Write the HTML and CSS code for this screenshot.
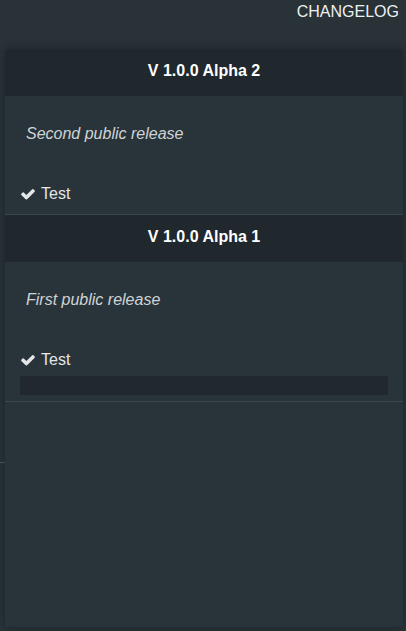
FILE: index.html
```html
<!DOCTYPE html>
<html>
<head>
<meta charset="utf-8">
<link rel="stylesheet" href="styles.css">
</head>
<body>
<div class="page">
  <div class="topbar"><span class="brand">CHANGELOG</span></div>
  <div class="backline"></div>
  <div class="card">
    <section class="release">
      <h2 class="release-title">V 1.0.0 Alpha 2</h2>
      <div class="release-body">
        <p class="release-desc">Second public release</p>
        <ul class="changes">
          <li><svg class="check" viewBox="0 0 1792 1792"><path d="M1671 566q0 40-28 68l-724 724-136 136q-28 28-68 28t-68-28l-136-136-362-362q-28-28-28-68t28-68l136-136q28-28 68-28t68 28l294 295 656-657q28-28 68-28t68 28l136 136q28 28 28 68z"/></svg>Test</li>
        </ul>
      </div>
    </section>
    <section class="release">
      <h2 class="release-title">V 1.0.0 Alpha 1</h2>
      <div class="release-body">
        <p class="release-desc">First public release</p>
        <ul class="changes">
          <li><svg class="check" viewBox="0 0 1792 1792"><path d="M1671 566q0 40-28 68l-724 724-136 136q-28 28-68 28t-68-28l-136-136-362-362q-28-28-28-68t28-68l136-136q28-28 68-28t68 28l294 295 656-657q28-28 68-28t68 28l136 136q28 28 28 68z"/></svg>Test</li>
        </ul>
        <div class="codebar"></div>
      </div>
    </section>
  </div>
</div>
</body>
</html>
```

FILE: styles.css
```css
html, body {
  margin: 0;
  padding: 0;
  background: #283237;
  font-family: "Liberation Sans", Arial, sans-serif;
  height: 100%;
  overflow: hidden;
}
.page {
  position: relative;
  height: 631px;
  display: flex;
  flex-direction: column;
}
.topbar {
  height: 49px;
  display: flex;
  justify-content: flex-end;
  padding: 2px 7px 0 0;
  box-sizing: border-box;
}
.brand {
  color: #eef1f3;
  font-size: 16px;
  line-height: 20px;
}
.backline {
  position: absolute;
  left: 0;
  top: 462px;
  width: 5px;
  height: 1px;
  background: #4b565d;
}
.card {
  position: relative;
  margin: 0 3px 4px 5px;
  flex: 1;
  background: #29333a;
  border-radius: 4px 4px 3px 3px;
  box-shadow: 0 0 8px rgba(0, 0, 0, 0.28);
  overflow: hidden;
}
.release {
  border-bottom: 1px solid #3b464d;
}
.release-title {
  margin: 0;
  height: 47px;
  box-sizing: border-box;
  padding: 11px 0 14px;
  text-align: center;
  background: #20272d;
  color: #ffffff;
  font-size: 16px;
  line-height: 22px;
  font-weight: bold;
}
.release-body {
  padding: 27px 15px 9px 15px;
}
.release-desc {
  margin: 0 0 38px 6px;
  color: #cfd3d5;
  font-style: italic;
  font-size: 16px;
  line-height: 22px;
}
.changes {
  list-style: none;
  margin: 0;
  padding: 0;
}
.changes li {
  display: flex;
  align-items: center;
  color: #e4e6e8;
  font-size: 16px;
  line-height: 22px;
}
.check {
  width: 16px;
  height: 16px;
  fill: #e4e6e8;
  margin: 0 5px 0 0;
}
.codebar {
  margin: 5px 0 -3px 0;
  height: 19px;
  background: #21292e;
}
```
